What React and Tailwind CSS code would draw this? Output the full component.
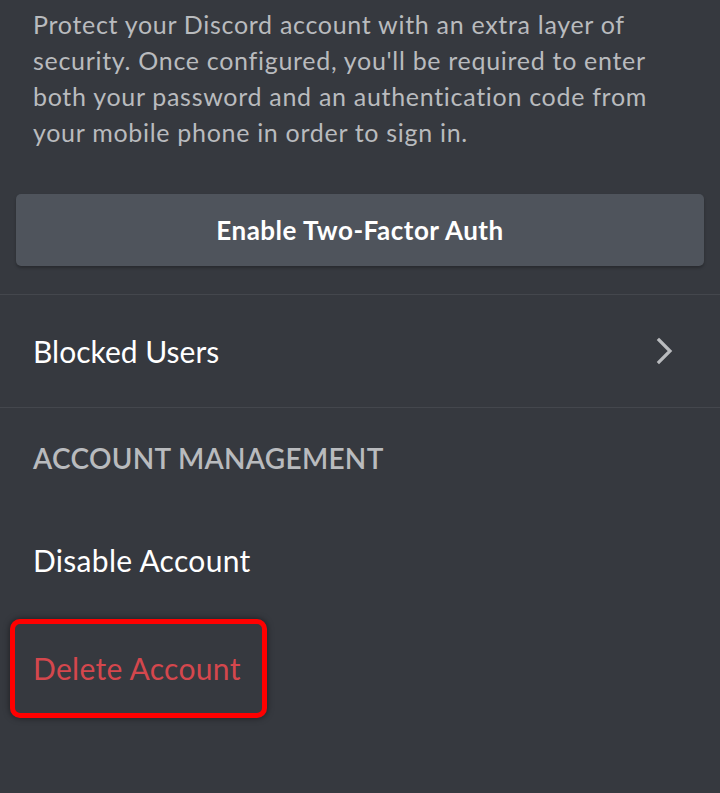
const font = { fontFamily: "Lato, 'Open Sans', sans-serif" };

function Chevron() {
  return (
    <svg width="18" height="28" viewBox="0 0 18 28" fill="none" className="text-[#b9bbbe]">
      <polyline points="3,3 14,14 3,25" stroke="currentColor" strokeWidth="3.2" strokeLinecap="square" />
    </svg>
  );
}

export default function App() {
  return (
    <div className="min-h-[793px] w-[720px] bg-[#36393f] overflow-hidden" style={font}>
      <p className="whitespace-nowrap px-[33px] pt-[6px] text-[25px] leading-[36px] tracking-[0.7px] text-[#b9bbbe]">
        Protect your Discord account with an extra layer of
        <br />
        security. Once configured, you'll be required to enter
        <br />
        both your password and an authentication code from
        <br />
        your mobile phone in order to sign in.
      </p>

      <div className="px-4 pt-[44px] pb-7">
        <button className="flex h-[72px] w-full items-center justify-center rounded-[5px] bg-[#4f545c] text-[26px] font-bold tracking-[0.5px] text-white shadow-[0_2px_3px_rgba(0,0,0,0.25)]">
          Enable Two-Factor Auth
        </button>
      </div>

      <div className="border-t border-[#44474d]">
        <div className="flex h-[112px] items-center justify-between pl-[33px] pr-[46px]">
          <span className="text-[30px] text-white">Blocked Users</span>
          <Chevron />
        </div>
      </div>

      <div className="border-t border-[#44474d]">
        <div className="px-[33px] pt-[29px] text-[28px] font-semibold uppercase tracking-[0.3px] text-[#b9bbbe]">
          Account Management
        </div>
        <div className="px-[33px] pt-[59px] text-[30px] tracking-[0.3px] text-white">Disable Account</div>
        <div className="px-[10px] pt-[36px]">
          <div className="w-[257px] rounded-[10px] border-[5px] border-[#ff0000] px-[18px] py-[22px] shadow-[0_0_6px_rgba(0,0,0,0.5)]">
            <span className="text-[30px] tracking-[0.3px] text-[#d4474d]">Delete Account</span>
          </div>
        </div>
      </div>
    </div>
  );
}
